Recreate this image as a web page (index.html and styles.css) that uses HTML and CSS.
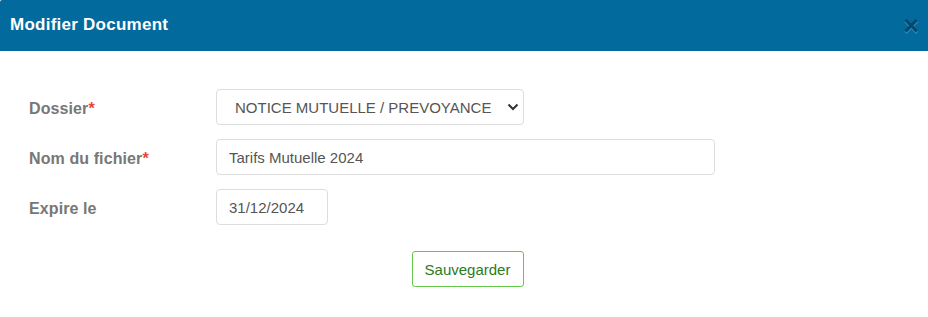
FILE: index.html
```html
<!DOCTYPE html>
<html lang="fr">
<head>
<meta charset="utf-8">
<title>Modifier Document</title>
<link rel="stylesheet" href="styles.css">
</head>
<body>
<div class="modal">
  <div class="modal-header">
    <h4 class="modal-title">Modifier Document</h4>
    <button class="close" type="button" aria-label="Fermer">&times;</button>
  </div>
  <form class="modal-body">
    <div class="row">
      <label class="label">Dossier<span class="req">*</span></label>
      <div class="control select-wrap">
        <span class="select-text">NOTICE MUTUELLE / PREVOYANCE</span>
        <svg class="chev" width="12" height="8" viewBox="0 0 12 8"><path d="M1.5 1.5 L6 6 L10.5 1.5" fill="none" stroke="#333" stroke-width="2"/></svg>
      </div>
    </div>
    <div class="row">
      <label class="label">Nom du fichier<span class="req">*</span></label>
      <input class="control input-wide" type="text" value="Tarifs Mutuelle 2024">
    </div>
    <div class="row">
      <label class="label">Expire le</label>
      <input class="control input-date" type="text" value="31/12/2024">
    </div>
    <div class="actions">
      <button class="btn-save" type="button">Sauvegarder</button>
    </div>
  </form>
</div>
</body>
</html>
```
FILE: styles.css
```css
* { box-sizing: border-box; }
html, body { margin: 0; padding: 0; background: #fff; }
body { font-family: "Liberation Sans", Arial, sans-serif; }

.modal { width: 928px; }

.modal-header {
  height: 51px;
  background: #036a9e;
  border-top-left-radius: 2px;
  display: flex;
  align-items: center;
  justify-content: space-between;
  padding: 0 9px 0 10px;
}
.modal-title {
  margin: 0;
  color: #fff;
  font-size: 17px;
  font-weight: bold;
  letter-spacing: 0.25px;
  padding-bottom: 1px;
}
.close {
  background: none;
  border: 0;
  padding: 0;
  margin: 2px 0 0 0;
  font-family: "Liberation Sans", Arial, sans-serif;
  font-size: 27px;
  font-weight: bold;
  line-height: 1;
  color: #000;
  text-shadow: 0 1px 0 #fff;
  opacity: .3;
}

.modal-body {
  padding: 38px 0 0 29px;
  display: flex;
  flex-direction: column;
  gap: 14px;
}
.row {
  display: grid;
  grid-template-columns: 187px auto;
  align-items: center;
  justify-items: start;
}
.label {
  font-size: 16px;
  font-weight: bold;
  color: #777;
  letter-spacing: 0.1px;
  padding-top: 4px;
}
.req { color: #e9453a; }

.control {
  height: 36px;
  border: 1px solid #ddd;
  border-radius: 4px;
  background: #fff;
  font-family: "Liberation Sans", Arial, sans-serif;
  font-size: 15px;
  color: #555;
}
.select-wrap {
  width: 308px;
  display: flex;
  align-items: center;
  justify-content: space-between;
  padding: 0 4px 0 18px;
}
input.control {
  padding: 0 12px;
  outline: none;
}
.input-wide { width: 499px; }
.input-date { width: 112px; }

.actions {
  display: flex;
  justify-content: center;
  padding: 12px 0 0 7px;
  margin-left: -29px;
}
.btn-save {
  width: 112px;
  height: 36px;
  background: #fff;
  border: 1px solid #66c84a;
  border-radius: 3px;
  color: #2b7a1d;
  font-family: "Liberation Sans", Arial, sans-serif;
  font-size: 15px;
}
```
